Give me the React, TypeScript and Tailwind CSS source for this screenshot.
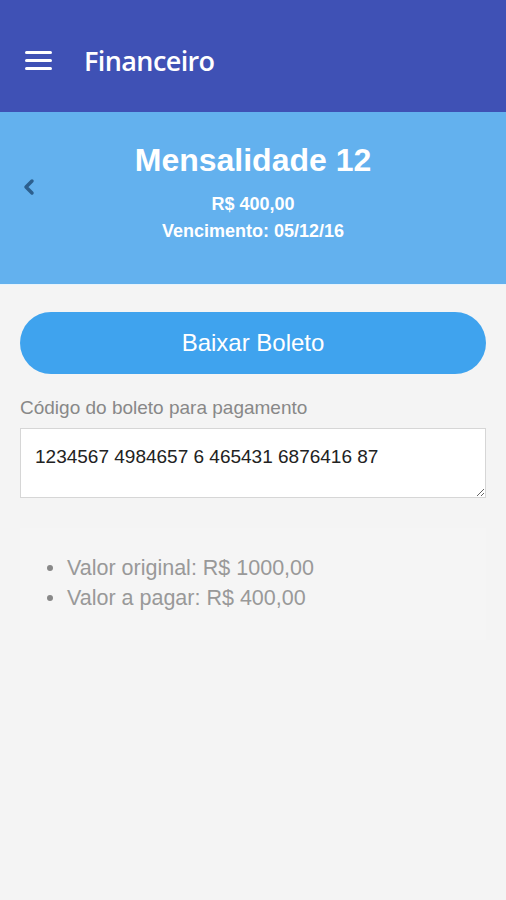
export default function App() {
  return (
    <div className="min-h-[900px] bg-[#f4f4f4] font-['Liberation_Sans',Arial,sans-serif]">
      <div className="h-[112px] bg-[#3f51b5] flex items-center px-[25px] pt-[8px] gap-[32px]">
        <div className="flex flex-col gap-[5px] w-[27px]">
          <span className="block h-[3px] bg-white rounded-sm" />
          <span className="block h-[3px] bg-white rounded-sm" />
          <span className="block h-[3px] bg-white rounded-sm" />
        </div>
        <h1 className="text-white text-[27px] font-semibold font-['Open_Sans',sans-serif] tracking-[-0.6px] mt-[3px]">Financeiro</h1>
      </div>

      <div className="relative h-[173px] bg-[#63b1ee] border-b border-[#e6f3fc] text-white text-center pt-[30px]">
        <button className="absolute left-[22px] top-[66px] text-[#2c5f8e]">
          <svg width="14" height="18" viewBox="0 0 14 18" fill="none">
            <path d="M10 3 L4 9 L10 15" stroke="currentColor" strokeWidth="3.5" strokeLinejoin="round" strokeLinecap="round" />
          </svg>
        </button>
        <h2 className="text-[32px] leading-[36px] font-bold">Mensalidade 12</h2>
        <p className="mt-[13px] text-[18px] leading-[27px] font-semibold">R$ 400,00</p>
        <p className="text-[18px] leading-[27px] font-semibold">Vencimento: 05/12/16</p>
      </div>

      <div className="px-[20px]">
        <button className="mt-[27px] w-full h-[62px] rounded-full bg-[#3fa3ee] text-white text-[24px]">
          Baixar Boleto
        </button>

        <label className="block mt-[23px] text-[19px] leading-[22px] text-[#888]">Código do boleto para pagamento</label>
        <textarea
          readOnly
          defaultValue="1234567 4984657 6 465431 6876416 87"
          className="mt-[9px] block w-full h-[70px] bg-white border border-[#d6d6d6] px-[14px] pt-[17px] text-[19px] leading-[22px] text-[#222] outline-none"
        />

        <div className="mt-[30px] bg-[#f5f5f5] pt-[25px] pb-[27px] pl-[27px]">
          <ul className="text-[21.5px] leading-[30px] text-[#999]">
            <li className="flex items-center gap-[14px]">
              <span className="w-[6px] h-[6px] rounded-full bg-[#888]" />
              Valor original: R$ 1000,00
            </li>
            <li className="flex items-center gap-[14px]">
              <span className="w-[6px] h-[6px] rounded-full bg-[#888]" />
              Valor a pagar: R$ 400,00
            </li>
          </ul>
        </div>
      </div>
    </div>
  );
}
